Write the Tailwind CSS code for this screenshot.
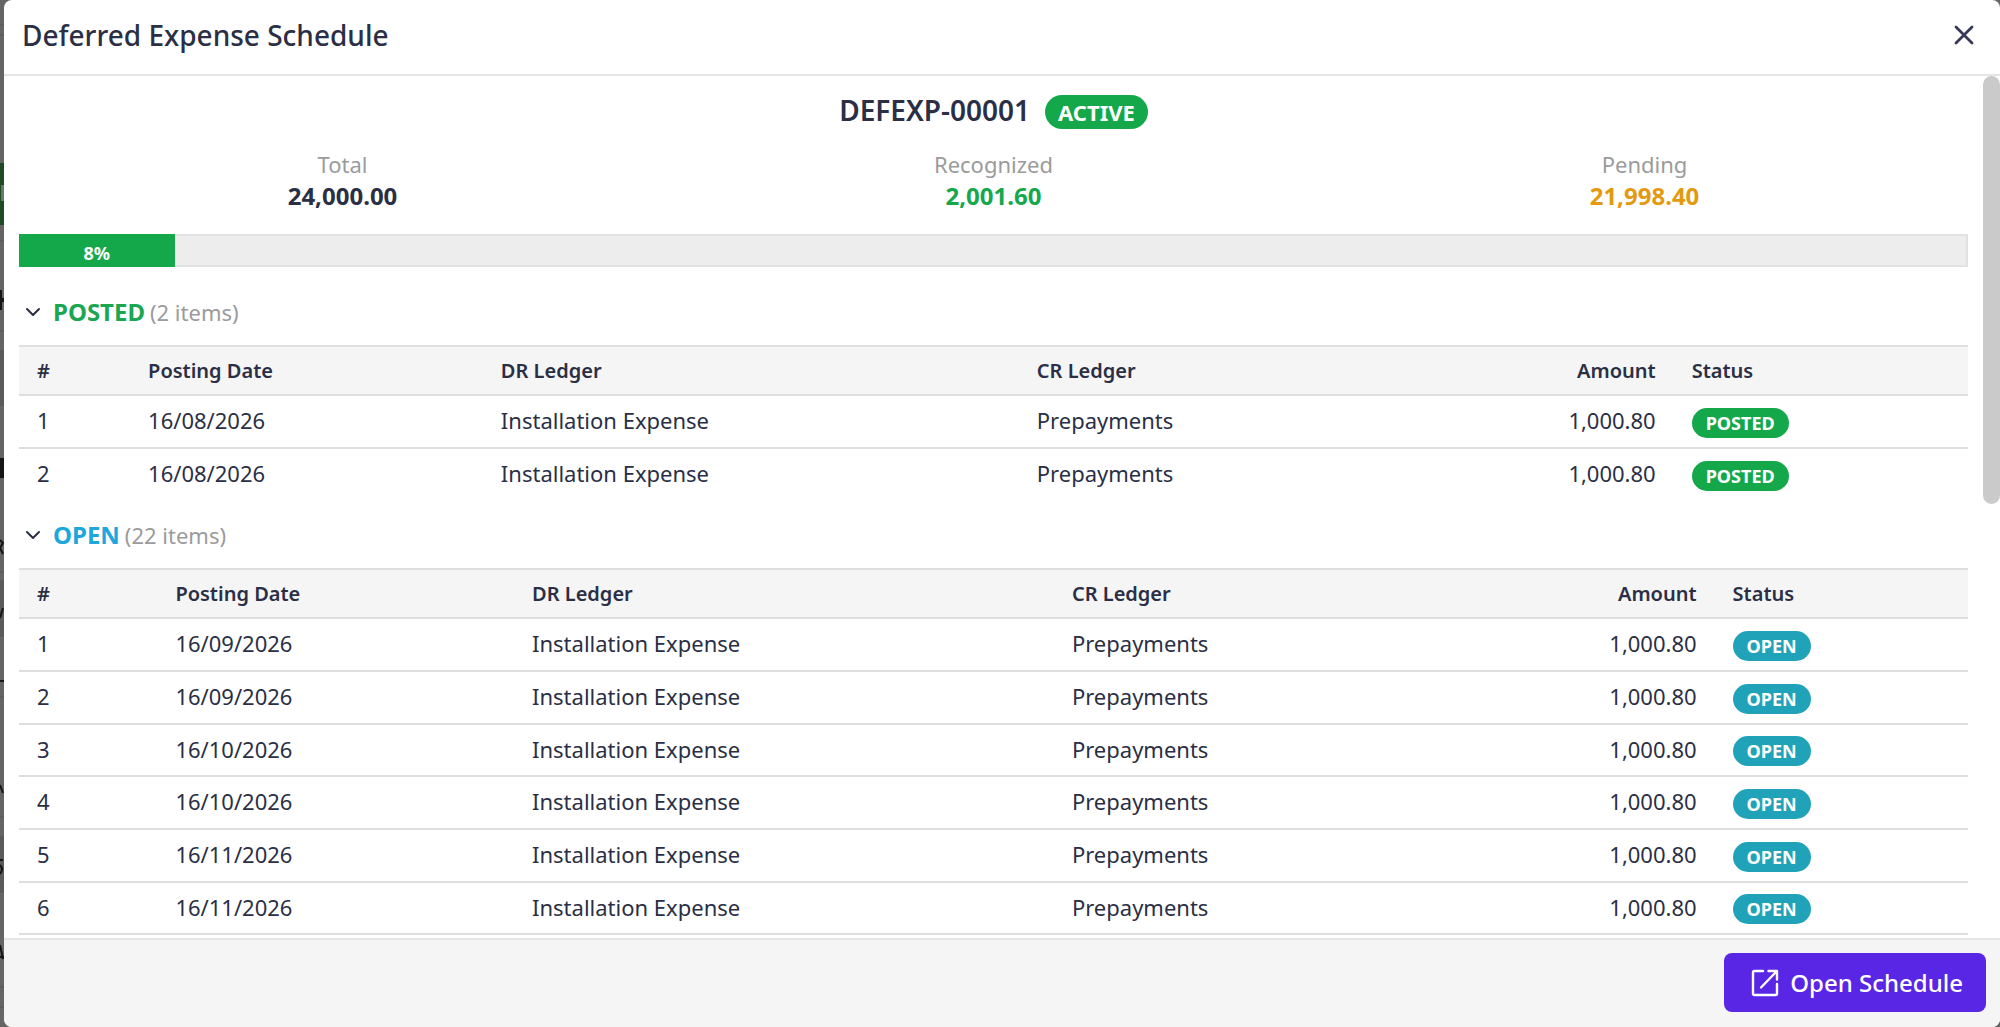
<!DOCTYPE html>
<html lang="en">
  <head>
    <meta charset="UTF-8" />
    <meta name="viewport" content="width=device-width, initial-scale=1.0" />
    <title>Deferred Expense Schedule</title>
    <script src="https://cdn.jsdelivr.net/npm/@tailwindcss/browser@4"></script>
  </head>
  <body class="h-screen overflow-hidden bg-[#666564] font-['Noto_Sans',sans-serif] text-[#2a2f45]">
    <!-- Strip of the dimmed page behind the modal -->
    <svg class="absolute left-0 top-0 h-[1027px] w-1" viewBox="0 0 4 1027" aria-hidden="true">
      <rect width="4" height="1027" fill="#666564" />
      <path d="M0 163h4v62H0z" fill="#1f4a23" />
      <path d="M1 185h3v16H1z" fill="#66786a" />
      <path d="M0 351h4v54H0zM0 580h4v56H0zM0 837h4v55H0z" fill="#5c5b5a" />
      <path d="M0 290h2v20H0zM2 298h2v4H2zM0 458h4v20H0zM0 680h4v2H0z" fill="#161616" />
      <path d="M0 25h4M0 35h4M0 241h4M0 331h4M0 351h4M0 405h4M0 572h4M0 636h4M0 697h4M0 817h4M0 837h4M0 892h4M0 987h4M0 1007h4" stroke="#555453" />
      <path d="M0 540l3 3-3 5 3 6M0 618l3-10M0 785l3 8M0 860h3M0 865q4 4 0 9M0 945l3 14M0 957h4" stroke="#161616" stroke-width="2" fill="none" />
    </svg>

    <!-- Modal -->
    <div class="relative ml-1 flex h-full flex-col overflow-hidden rounded-lg bg-white" role="dialog" aria-labelledby="title">
      <header class="flex h-[76px] shrink-0 items-center justify-between border-b-2 border-[#e5e5e5] pl-[18px] pr-[22px] pb-1">
        <h1 id="title" class="text-[28px] font-medium leading-10">Deferred Expense Schedule</h1>
        <button type="button" class="p-0.5" aria-label="Close">
          <svg class="size-6" viewBox="0 0 24 24" fill="none" stroke="#38395a" stroke-width="2.8" stroke-linecap="round">
            <path d="M4 4l16 16M20 4L4 20" />
          </svg>
        </button>
      </header>

      <main class="relative min-h-0 flex-1">
        <div class="h-full overflow-y-auto pl-[15px] pr-8 pt-3.5 [scrollbar-width:none]">
          <div class="flex items-center justify-center gap-[15px]">
            <h2 class="text-[28px] font-semibold leading-10">DEFEXP-00001</h2>
            <span class="mt-1 rounded-full bg-[#14a84b] px-[13px] text-[22px] font-bold leading-[34px] text-white">ACTIVE</span>
          </div>

          <dl class="-mx-0.5 mt-[18px] grid grid-cols-3 text-center text-[22px] leading-8">
            <div>
              <dt class="text-[#9b9b9b]">Total</dt>
              <dd class="text-2xl font-bold">24,000.00</dd>
            </div>
            <div>
              <dt class="text-[#9b9b9b]">Recognized</dt>
              <dd class="text-2xl font-bold text-[#14a84b]">2,001.60</dd>
            </div>
            <div>
              <dt class="text-[#9b9b9b]">Pending</dt>
              <dd class="text-2xl font-bold text-[#e39a0e]">21,998.40</dd>
            </div>
          </dl>

          <div class="mt-[22px] h-[33px] border-2 border-[#e2e2e2] bg-[#ededed]">
            <div class="-m-0.5 h-[33px] bg-[#14a84b] pt-[3px] text-center text-lg font-bold leading-8 text-white" style="width: 8%">8%</div>
          </div>

          <!-- Posted -->
          <section class="mt-[22px]">
            <button type="button" class="flex h-[46px] items-center pl-1.5 text-[22px]">
              <svg class="mr-3 size-4" viewBox="0 0 16 16" fill="none" stroke="currentColor" stroke-width="2" stroke-linecap="round" stroke-linejoin="round">
                <path d="M2 5l6 6 6-6" />
              </svg>
              <span class="text-2xl font-bold text-[#1ba651]">POSTED</span>
              <span class="ml-[5px] text-[#9b9b9b]">(2 items)</span>
            </button>
            <table class="mt-2.5 w-full table-fixed border-t-2 border-[#dedede] text-left text-[22px]">
              <colgroup>
                <col class="w-[5.7%]" />
                <col class="w-[18.1%]" />
                <col class="w-[27.5%]" />
                <col class="w-[20%]" />
                <col class="w-[13.6%]" />
                <col class="w-[15.1%]" />
              </colgroup>
              <thead class="bg-[#f5f5f5] text-xl [&_th]:h-[49px] [&_th]:px-[18px] [&_th]:font-semibold">
                <tr class="border-b-2 border-[#dedede]">
                  <th>#</th>
                  <th>Posting Date</th>
                  <th>DR Ledger</th>
                  <th>CR Ledger</th>
                  <th class="text-right">Amount</th>
                  <th>Status</th>
                </tr>
              </thead>
              <tbody id="posted" class="[&_td]:px-[18px] [&_td]:pb-0.5 [&_tr]:h-[53px] [&_tr:last-child]:h-[52px]"></tbody>
            </table>
          </section>

          <!-- Open -->
          <section class="mt-3">
            <button type="button" class="flex h-[46px] items-center pl-1.5 text-[22px]">
              <svg class="mr-3 size-4" viewBox="0 0 16 16" fill="none" stroke="currentColor" stroke-width="2" stroke-linecap="round" stroke-linejoin="round">
                <path d="M2 5l6 6 6-6" />
              </svg>
              <span class="text-2xl font-bold text-[#1ea7dc]">OPEN</span>
              <span class="ml-[5px] text-[#9b9b9b]">(22 items)</span>
            </button>
            <table class="mt-2.5 mb-9 w-full table-fixed border-t-2 border-[#dedede] text-left text-[22px]">
              <colgroup>
                <col class="w-[7.1%]" />
                <col class="w-[18.3%]" />
                <col class="w-[27.7%]" />
                <col class="w-[20%]" />
                <col class="w-[13.9%]" />
                <col class="w-[13%]" />
              </colgroup>
              <thead class="bg-[#f5f5f5] text-xl [&_th]:h-[49px] [&_th]:px-[18px] [&_th]:font-semibold">
                <tr class="border-b-2 border-[#dedede]">
                  <th>#</th>
                  <th>Posting Date</th>
                  <th>DR Ledger</th>
                  <th>CR Ledger</th>
                  <th class="text-right">Amount</th>
                  <th>Status</th>
                </tr>
              </thead>
              <tbody id="open" class="[&_td]:px-[18px] [&_td]:pb-0.5 [&_tr]:h-[53px] [&_tr:nth-child(3n)]:h-[52px]"></tbody>
            </table>
          </section>
        </div>
        <!-- Scrollbar thumb -->
        <div class="absolute right-0 top-0 h-[49.6%] w-[17px] rounded-full bg-[#cacaca]"></div>
      </main>

      <footer class="flex h-[89px] shrink-0 items-center justify-end border-t-2 border-[#e5e5e5] bg-[#f5f5f5] pr-3.5 pb-0.5">
        <button type="button" class="flex h-[59px] items-center gap-[11px] rounded-lg bg-[#5926e6] pl-[27px] pr-[23px] text-2xl font-medium text-white">
          <svg class="size-7" viewBox="0 0 28 28" fill="none" stroke="currentColor" stroke-width="2.4" stroke-linecap="round" stroke-linejoin="round">
            <path d="M12 2H3.500Q2 2 2 3.500V24.500Q2 26 3.500 26H24.500Q26 26 26 24.500V15" />
            <path d="M17.500 2H26V10.500M26 2L10 18.500" />
          </svg>
          Open Schedule
        </button>
      </footer>
    </div>

    <script>
      const badge = {
        POSTED: "bg-[#14a84b]",
        OPEN: "bg-[#20a3b8]",
      };

      function renderRows(id, dates, status) {
        document.getElementById(id).innerHTML = dates
          .map(
            (date, i) => `
            <tr class="border-b-2 border-[#dedede] last:border-b-0">
              <td>${i + 1}</td>
              <td>${date}</td>
              <td>Installation Expense</td>
              <td>Prepayments</td>
              <td class="text-right">1,000.80</td>
              <td><span class="mt-1 block w-fit rounded-full px-3.5 text-lg font-bold leading-[30px] text-white ${badge[status]}">${status}</span></td>
            </tr>`
          )
          .join("");
      }

      // Two postings a month, starting in September 2026
      const openDates = [];
      for (let i = 0; i < 22; i++) {
        const month = 8 + Math.floor(i / 2);
        const mm = String((month % 12) + 1).padStart(2, "0");
        openDates.push(`16/${mm}/${2026 + Math.floor(month / 12)}`);
      }

      renderRows("posted", ["16/08/2026", "16/08/2026"], "POSTED");
      renderRows("open", openDates, "OPEN");
    </script>
  </body>
</html>
